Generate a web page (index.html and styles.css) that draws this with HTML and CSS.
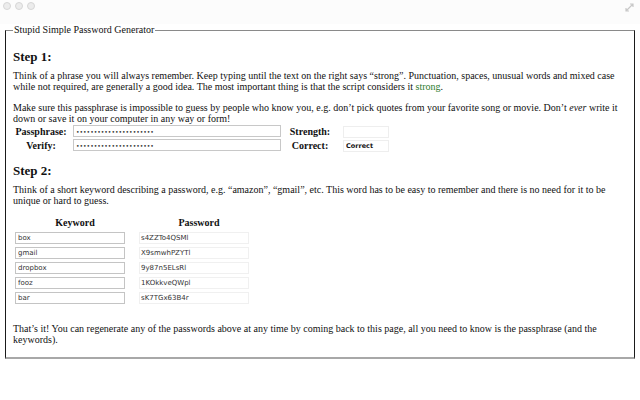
FILE: index.html
```html
<!DOCTYPE html>
<html lang="en">
<head>
    <meta charset="UTF-8">
    <meta name="viewport" content="width=device-width, initial-scale=1.0">
    <title>Stupid Simple Password Generator</title>
    <link rel="stylesheet" href="styles.css">
</head>
<body>
    <div class="titlebar">
        <div class="lights">
            <span class="light"></span>
            <span class="light"></span>
            <span class="light"></span>
        </div>
        <svg class="resize" width="9" height="9" viewBox="0 0 9 9">
            <path d="M1 8 L8 1 M5 1 H8 V4 M1 5 V8 H4" fill="none" stroke="#c8c8c8" stroke-width="1.2"/>
        </svg>
    </div>
    <fieldset class="generator">
        <legend>Stupid Simple Password Generator</legend>

        <h3>Step 1:</h3>
        <p>Think of a phrase you will always remember. Keep typing until the text on the right says &ldquo;strong&rdquo;. Punctuation, spaces, unusual words and mixed case while not required, are generally a good idea. The most important thing is that the script considers it <span class="strong">strong</span>.</p>
        <p>Make sure this passphrase is impossible to guess by people who know you, e.g. don&rsquo;t pick quotes from your favorite song or movie. Don&rsquo;t <em>ever</em> write it down or save it on your computer in any way or form!</p>
        <table class="passphrase">
            <tr>
                <th>Passphrase:</th>
                <td><input type="password" class="phrase" value="passwordpasswordpasswo"></td>
                <th>Strength:</th>
                <td><input type="text" class="status" readonly spellcheck="false"></td>
            </tr>
            <tr>
                <th>Verify:</th>
                <td><input type="password" class="phrase" value="passwordpasswordpasswo"></td>
                <th>Correct:</th>
                <td><input type="text" class="status correct" value="Correct" readonly spellcheck="false"></td>
            </tr>
        </table>

        <h3>Step 2:</h3>
        <p>Think of a short keyword describing a password, e.g. &ldquo;amazon&rdquo;, &ldquo;gmail&rdquo;, etc. This word has to be easy to remember and there is no need for it to be unique or hard to guess.</p>
        <table class="keywords">
            <tr><th>Keyword</th><th>Password</th></tr>
            <tr><td><input type="text" class="keyword" value="box" spellcheck="false"></td><td><input type="text" class="generated" value="s4ZZTo4QSMl" readonly spellcheck="false"></td></tr>
            <tr><td><input type="text" class="keyword" value="gmail" spellcheck="false"></td><td><input type="text" class="generated" value="X9smwhPZYTl" readonly spellcheck="false"></td></tr>
            <tr><td><input type="text" class="keyword" value="dropbox" spellcheck="false"></td><td><input type="text" class="generated" value="9y87n5ELsRl" readonly spellcheck="false"></td></tr>
            <tr><td><input type="text" class="keyword" value="fooz" spellcheck="false"></td><td><input type="text" class="generated" value="1KOkkveQWpl" readonly spellcheck="false"></td></tr>
            <tr><td><input type="text" class="keyword" value="bar" spellcheck="false"></td><td><input type="text" class="generated" value="sK7TGx63B4r" readonly spellcheck="false"></td></tr>
        </table>

        <p class="closing">That&rsquo;s it! You can regenerate any of the passwords above at any time by coming back to this page, all you need to know is the passphrase (and the keywords).</p>
    </fieldset>
</body>
</html>
```

FILE: styles.css
```css
body {
    margin: 0;
    background: #fff;
    font-family: "Liberation Serif", "Times New Roman", serif;
    font-size: 10px;
    color: #111;
}
.titlebar {
    height: 24px;
    display: flex;
    justify-content: space-between;
    align-items: flex-start;
    padding: 2px 6px 0 3px;
    box-sizing: border-box;
    background: #fcfcfc;
}
.lights {
    display: flex;
    gap: 4px;
}
.light {
    width: 6px;
    height: 6px;
    border-radius: 50%;
    background: #ececec;
    border: 1px solid #d6d6d6;
}
.resize {
    margin-top: 1px;
}
.generator {
    margin: 0 5px;
    padding: 6px 7px 12px 7px;
    border: 1px solid #1a1a1a;
    border-top-color: #8a8a8a;
    border-bottom: 2px solid #a8a8a8;
}
.generator legend {
    padding: 0 1px;
    font-size: 10px;
    line-height: 12px;
}
h3 {
    margin: 7px 0 5px 0;
    font-size: 13px;
    line-height: 16px;
}
p {
    margin: 0 0 10px 0;
    line-height: 11px;
}
.strong {
    color: #2e7d2e;
}
table {
    border-collapse: collapse;
}
.passphrase {
    margin: -10px 0 11px 0;
}
.passphrase th {
    width: 56px;
    padding: 1px 0 0 0;
    text-align: center;
    font-size: 10px;
    height: 13px;
}
.passphrase td {
    padding: 0 0 0 4px;
}
.passphrase th + td + th {
    width: 58px;
}
input {
    box-sizing: border-box;
    height: 12px;
    margin: 0;
    padding: 0 2px;
    font-family: "DejaVu Sans", sans-serif;
    font-size: 7px;
    color: #333;
    background: #fff;
    border: 1px solid #cfcfcf;
    outline: none;
}
.phrase {
    width: 208px;
    font-size: 6px;
    border-color: #c8c8c8;
}
.status {
    width: 46px;
    border-color: #eeeeee;
}
.status.correct {
    font-size: 6.5px;
    font-weight: bold;
    color: #111;
}
.keywords {
    margin: -1px 0 18px 0;
}
.keywords th {
    font-size: 10px;
    height: 14px;
    padding: 0 0 1px 0;
    text-align: center;
}
.keywords td {
    height: 15px;
    padding: 0 12px 0 2px;
}
.keyword {
    width: 110px;
    border-color: #c4c4c4;
}
.generated {
    width: 110px;
    padding-left: 1px;
    border-color: #f0f0f0;
}
.closing {
    margin: 0;
}
```
